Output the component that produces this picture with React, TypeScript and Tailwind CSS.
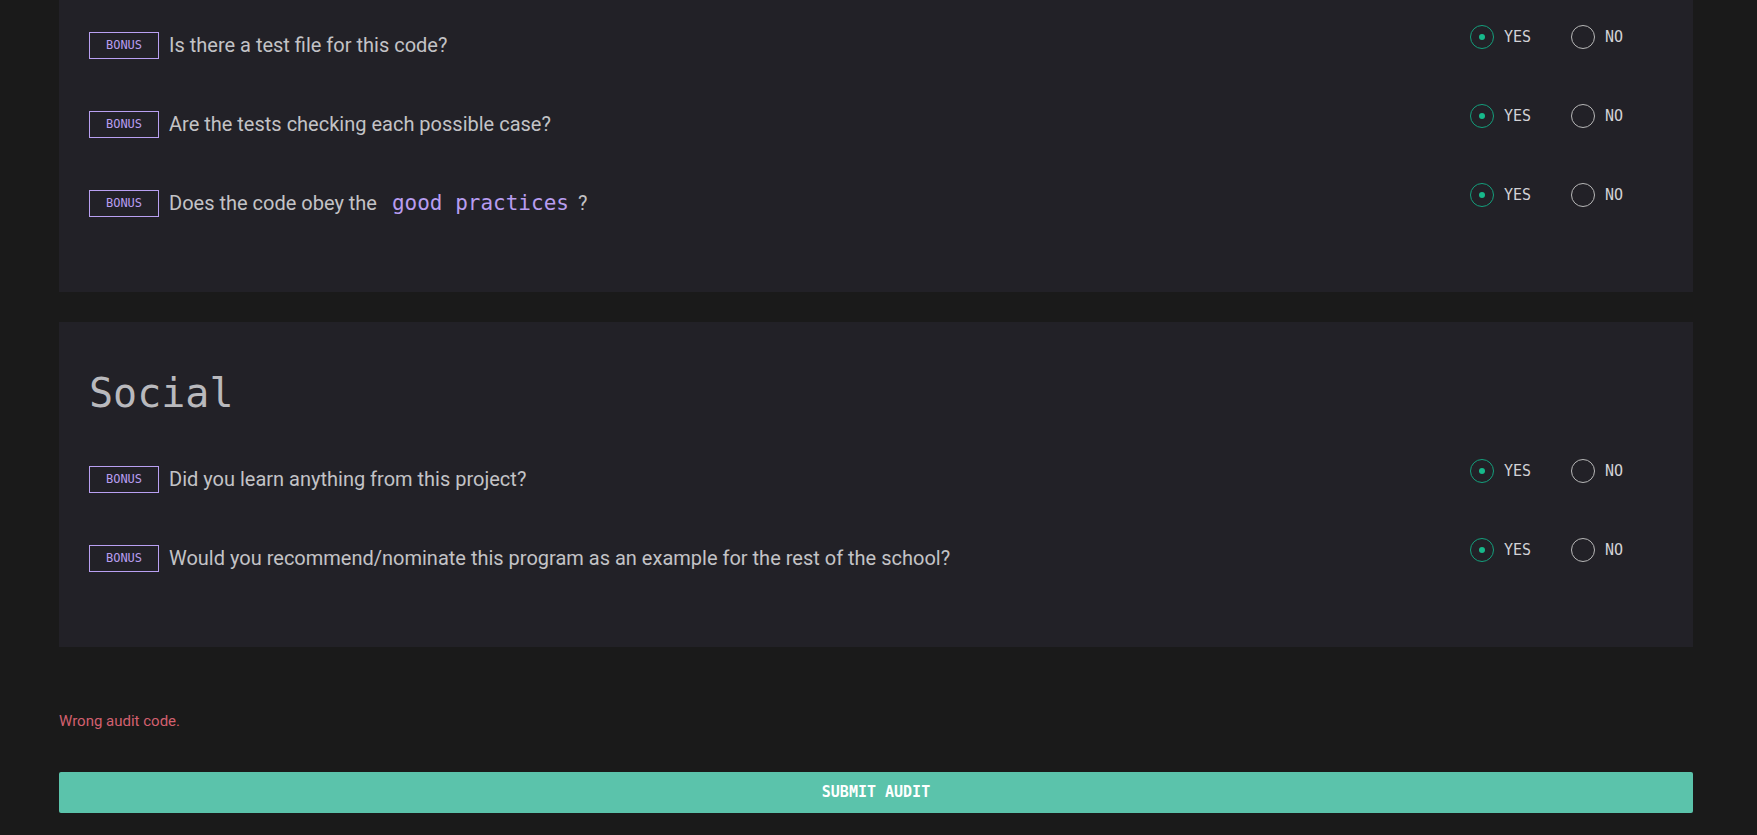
import React from 'react';

type Question = {
  id: string;
  text: React.ReactNode;
};

const FIRST: Question[] = [
  { id: 'test-file', text: 'Is there a test file for this code?' },
  { id: 'test-cases', text: 'Are the tests checking each possible case?' },
  {
    id: 'good-practices',
    text: (
      <>
        Does the code obey the{' '}
        <code className="pl-[10px] pr-[4px] font-['DejaVu_Sans_Mono',monospace] text-[21px] text-[#b89df0]">
          good practices
        </code>{' '}
        ?
      </>
    ),
  },
];

const SOCIAL: Question[] = [
  { id: 'learn', text: 'Did you learn anything from this project?' },
  {
    id: 'recommend',
    text: 'Would you recommend/nominate this program as an example for the rest of the school?',
  },
];

const Radio = ({ checked, label }: { checked: boolean; label: string }) => (
  <label className="flex items-center gap-[10px] cursor-pointer">
    <span
      className={
        checked
          ? 'flex h-6 w-6 items-center justify-center rounded-full border-[1.5px] border-[#149f7c]'
          : 'flex h-6 w-6 items-center justify-center rounded-full border-[1.5px] border-[#b8b8b8]'
      }
    >
      {checked && <span className="h-[6px] w-[6px] rounded-full bg-[#17b98b]" />}
    </span>
    <span className="font-['DejaVu_Sans_Mono',monospace] text-[15px] leading-none text-[#d2d2d6]">
      {label}
    </span>
  </label>
);

const Row = ({ q }: { q: Question }) => (
  <div className="flex items-start justify-between">
    <div className="flex items-center gap-[10px] pt-[6px]">
      <span className="flex h-[27px] w-[70px] shrink-0 items-center justify-center border border-[#b9a0f2] font-['DejaVu_Sans_Mono',monospace] text-[12px] text-[#b89df0]">
        BONUS
      </span>
      <p className="font-['Roboto',sans-serif] text-[20px] leading-[28px] text-[#c3c3c6]">{q.text}</p>
    </div>
    <div className="flex w-[193px] shrink-0 items-center">
      <div className="w-[101px]">
        <Radio checked label="YES" />
      </div>
      <Radio checked={false} label="NO" />
    </div>
  </div>
);

export default function App() {
  return (
    <div className="min-h-screen w-full bg-[#1a1a1a] pb-[23px]">
      <div className="ml-[59px] w-[1634px]">
        {/* Previous section, scrolled partly out of view */}
        <section className="flex flex-col gap-[45px] bg-[#222127] pb-[75px] pl-[30px] pr-[30px] pt-[25px]">
          {FIRST.map((q) => (
            <Row key={q.id} q={q} />
          ))}
        </section>

        <section className="mt-[30px] bg-[#222127] pb-[75px] pl-[30px] pr-[30px] pt-[51px]">
          <h2 className="font-['DejaVu_Sans_Mono',monospace] text-[40px] font-light leading-[40px] text-[#b9b9bd]">
            Social
          </h2>
          <div className="mt-[46px] flex flex-col gap-[45px]">
            {SOCIAL.map((q) => (
              <Row key={q.id} q={q} />
            ))}
          </div>
        </section>

        <p className="mt-[64px] font-['Roboto',sans-serif] text-[15px] leading-[20px] text-[#d2606f]">
          Wrong audit code.
        </p>

        <button className="mt-[41px] flex h-[41px] w-full items-center justify-center rounded-[2px] bg-[#5bc3ab] font-['DejaVu_Sans_Mono',monospace] text-[15px] font-bold text-white">
          SUBMIT AUDIT
        </button>
      </div>
    </div>
  );
}
